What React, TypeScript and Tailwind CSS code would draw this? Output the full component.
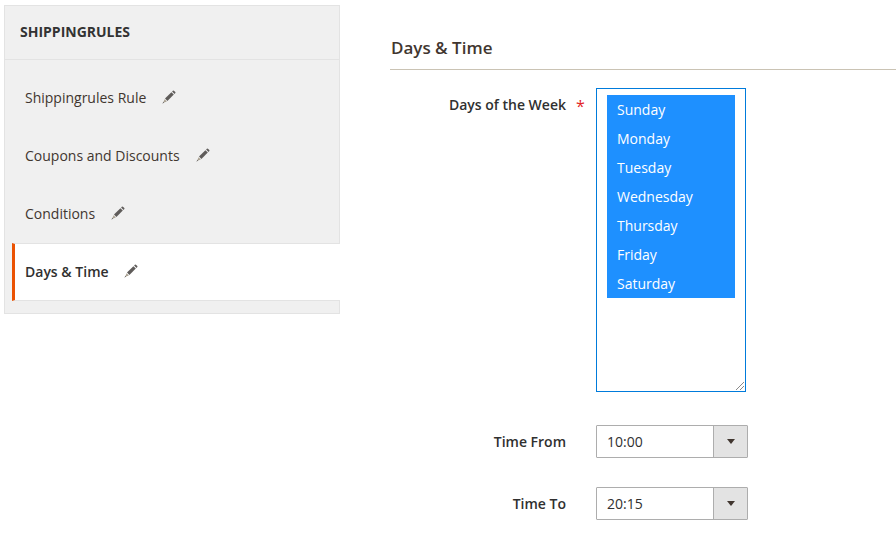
import React from 'react';

const tabs = ['Shippingrules Rule', 'Coupons and Discounts', 'Conditions'];
const days = ['Sunday', 'Monday', 'Tuesday', 'Wednesday', 'Thursday', 'Friday', 'Saturday'];

function Pencil() {
  return (
    <svg width="14" height="14" viewBox="0 0 14 14" className="shrink-0">
      <path d="M3 8.6 L9.4 2.2 L11.8 4.6 L5.4 11 Z" fill="#5f5c5a" />
      <path d="M10.1 1.5 L10.9 0.7 Q11.4 0.3 11.9 0.7 L13.3 2.1 Q13.7 2.6 13.3 3.1 L12.5 3.9 Z" fill="#5f5c5a" />
      <path d="M2.6 9.2 L4.8 11.4 L1.2 12.8 Z" fill="#a89f8f" />
      <path d="M1.5 11.8 L2.2 12.5 L0.3 13.7 Z" fill="#5f5c5a" />
    </svg>
  );
}

function TimeSelect({ value }: { value: string }) {
  return (
    <div className="flex h-[33px] w-[152px] rounded-[1px] border border-[#adadad] bg-white">
      <div className="flex-1 pl-[10px] text-[14px] leading-[31px] text-[#303030]">{value}</div>
      <div className="flex w-[34px] items-center justify-center border-l border-[#adadad] bg-[#e3e3e3]">
        <svg width="8" height="5" viewBox="0 0 8 5">
          <path d="M0 0 H8 L4 5 Z" fill="#41362f" />
        </svg>
      </div>
    </div>
  );
}

export default function App() {
  return (
    <div className="flex h-[556px] w-[896px] overflow-hidden bg-white pl-[4px] pt-[5px] font-['Open_Sans',sans-serif] text-[14px] text-[#303030]">
      <aside className="h-[309px] w-[336px] border border-[#e3e3e3] bg-[#f0f0f0]">
        <div className="h-[54px] border-b border-[#e3e3e3] pl-[15px] pt-[16px] text-[14px] font-bold leading-[20px] text-[#333333]">
          SHIPPINGRULES
        </div>
        <nav className="-mr-[1px] ml-[7px] pt-[9px]">
          {tabs.map((tab) => (
            <div key={tab} className="flex h-[58px] items-center gap-[16px] pb-[2px] pl-[13px] text-[#41362f]">
              <span>{tab}</span>
              <Pencil />
            </div>
          ))}
          <div className="flex h-[58px] items-center gap-[15px] border-y border-[#e3e3e3] border-l-[3px] border-l-[#eb5202] bg-white pb-[2px] pl-[10px] font-semibold text-[#303030]">
            <span>Days &amp; Time</span>
            <Pencil />
          </div>
        </nav>
      </aside>
      <main className="ml-[50px] flex-1">
        <h2 className="h-[65px] border-b border-[#cac3b4] pl-[1px] pt-[29px] text-[17px] font-semibold leading-[28px] text-[#41362f]">
          Days &amp; Time
        </h2>
        <div className="mt-[18px] flex">
          <label className="w-[176px] pt-[6px] text-right font-semibold leading-[21px] text-[#303030]">Days of the Week</label>
          <span className="ml-[10px] w-[20px] pt-[8px] text-[16px] leading-[21px] text-[#e22626]">*</span>
          <div className="relative h-[304px] w-[150px] border border-[#007bdb] bg-white pl-[10px] pt-[6px]">
            <ul className="w-[128px] bg-[#1e90ff] text-white">
              {days.map((day) => (
                <li key={day} className="h-[29px] pl-[10px] leading-[29px]">{day}</li>
              ))}
            </ul>
            <svg width="10" height="10" viewBox="0 0 10 10" className="absolute bottom-0 right-0">
              <path d="M1 9 L9 1 M5 9 L9 5" stroke="#8a8a8a" strokeWidth="1" />
            </svg>
          </div>
        </div>
        <div className="mt-[33px] flex items-center">
          <label className="w-[176px] text-right font-semibold text-[#303030]">Time From</label>
          <div className="ml-[30px]"><TimeSelect value="10:00" /></div>
        </div>
        <div className="mt-[29px] flex items-center">
          <label className="w-[176px] text-right font-semibold text-[#303030]">Time To</label>
          <div className="ml-[30px]"><TimeSelect value="20:15" /></div>
        </div>
      </main>
    </div>
  );
}
